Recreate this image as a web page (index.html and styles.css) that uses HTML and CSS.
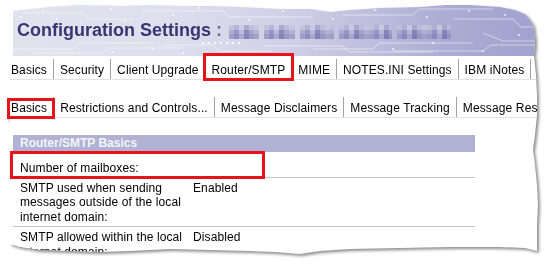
FILE: index.html
```html
<!DOCTYPE html>
<html lang="en">
<head>
<meta charset="utf-8">
<title>Configuration Settings</title>
<link rel="stylesheet" href="styles.css">
</head>
<body>
<div class="sheet">
  <div class="paper">
    <header class="banner">
      <svg class="circuit" width="522" height="51" viewBox="0 0 522 51" aria-hidden="true">
        <g fill="none" stroke="#ffffff" stroke-opacity="0.5" stroke-width="1">
          <path d="M0 44 H60 L66 38 H140"/>
          <path d="M20 48 H90 L95 43 H170"/>
          <path d="M150 40 H200 L206 46 H260"/>
          <path d="M250 41 H330 L336 47 H420"/>
          <path d="M300 44 H360 L366 38 H460"/>
          <path d="M380 46 H470 L478 40 H522"/>
          <path d="M10 8 H70 L76 14 H120"/>
          <path d="M130 6 H210 L216 12 H300"/>
          <path d="M330 10 H400 L406 4 H480"/>
          <path d="M440 14 H500 L508 22 H522"/>
          <path d="M60 20 V30"/>
          <path d="M470 28 L490 36 H522"/>
        </g>
        <g fill="#ffffff" fill-opacity="0.8">
          <circle cx="8" cy="12" r="1"/><circle cx="30" cy="6" r="1"/><circle cx="44" cy="14" r="1"/>
          <circle cx="98" cy="4" r="1"/><circle cx="112" cy="16" r="1"/><circle cx="160" cy="10" r="1"/>
          <circle cx="186" cy="3" r="1"/><circle cx="236" cy="15" r="1"/><circle cx="270" cy="6" r="1"/>
          <circle cx="320" cy="14" r="1"/><circle cx="362" cy="5" r="1"/><circle cx="414" cy="12" r="1"/>
          <circle cx="456" cy="6" r="1"/><circle cx="492" cy="10" r="1"/><circle cx="506" cy="30" r="1"/>
          <circle cx="190" cy="38" r="1.3"/><circle cx="196" cy="38" r="1.3"/><circle cx="202" cy="38" r="1.3"/>
          <circle cx="208" cy="38" r="1.3"/><circle cx="214" cy="38" r="1.3"/><circle cx="220" cy="38" r="1.3"/>
          <circle cx="226" cy="38" r="1.3"/>
          <circle cx="140" cy="44" r="1"/><circle cx="170" cy="48" r="1"/><circle cx="420" cy="38" r="1"/>
          <circle cx="380" cy="44" r="1"/><circle cx="100" cy="47" r="1"/><circle cx="470" cy="46" r="1"/>
        </g>
      </svg>
      <h1 class="title">Configuration Settings <span class="colon">:</span></h1>
      <span class="redacted" role="img" aria-label="server name (pixelated)">
        <i class="blk w1"></i><i class="blk w2"></i><i class="blk w3"></i><i class="blk w4"></i><i class="blk w5"></i>
      </span>
    </header>

    <ul class="tabs tabs-main">
      <li class="tab first">Basics</li>
      <li class="tab">Security</li>
      <li class="tab">Client Upgrade</li>
      <li class="tab marked">Router/SMTP</li>
      <li class="tab">MIME</li>
      <li class="tab">NOTES.INI Settings</li>
      <li class="tab">IBM iNotes</li>
    </ul>

    <ul class="tabs tabs-sub">
      <li class="tab first marked">Basics</li>
      <li class="tab">Restrictions and Controls...</li>
      <li class="tab">Message Disclaimers</li>
      <li class="tab">Message Tracking</li>
      <li class="tab">Message Restrictions</li>
    </ul>

    <section class="panel">
      <h2 class="panel-head">Router/SMTP Basics</h2>
      <div class="row row-first marked-row">
        <div class="label">Number of mailboxes:</div>
        <div class="value"></div>
      </div>
      <div class="row">
        <div class="label">SMTP used when sending messages outside of the local internet domain:</div>
        <div class="value">Enabled</div>
      </div>
      <div class="row">
        <div class="label">SMTP allowed within the local internet domain:</div>
        <div class="value">Disabled</div>
      </div>
    </section>
  </div>
</div>
</body>
</html>
```

FILE: styles.css
```css
html, body {
  margin: 0;
  padding: 0;
  background: #ffffff;
}

body {
  width: 547px;
  height: 268px;
  overflow: hidden;
  font-family: "Liberation Sans", Arial, sans-serif;
  font-size: 12px;
  color: #000000;
}

.sheet {
  padding: 5px 0 0 10px;
  filter: drop-shadow(2px 2px 1.5px rgba(0, 0, 0, 0.45));
}

.paper {
  width: 528px;
  height: 255px;
  background: #ffffff;
  clip-path: polygon(
    -6px 6px, 3px 6px, 20px 4px, 40px 2px, 70px 0px, 110px 1px, 140px 0px, 170px 1px,
    200px 1px, 230px 2px, 270px 4px, 300px 4px, 320px 7px, 340px 5px, 370px 3px,
    410px 2px, 435px 0px, 460px 0px, 490px 2px, 505px 5px, 515px 9px, 520px 15px,
    523px 20px, 525px 35px, 524px 50px, 526px 70px, 527px 90px, 527px 110px,
    525px 130px, 523px 145px, 525px 160px, 527px 180px, 528px 200px, 527px 220px,
    527px 235px, 527px 246px, 515px 243px, 490px 242px, 440px 242px, 390px 243px,
    340px 244px, 310px 246px, 290px 249px, 265px 247px, 240px 246px, 200px 245px,
    160px 244px, 120px 246px, 90px 247px, 60px 246px, 30px 245px, 10px 242px,
    0px 239px, -6px 239px
  );
}

/* ---------- banner ---------- */
.banner {
  position: relative;
  margin-left: 3px;
  width: 522px;
  height: 51px;
  box-sizing: border-box;
  padding: 15px 0 0 4px;
  display: flex;
  align-items: flex-start;
  background: linear-gradient(90deg, #e2e2ef 0%, #dedeed 30%, #d2d2e7 50%, #bebedd 68%, #aaaad3 85%, #a2a2cf 100%);
}

.circuit {
  position: absolute;
  left: 0;
  top: 0;
}

.title {
  position: relative;
  margin: 0;
  font-family: "Liberation Sans", Arial, sans-serif;
  font-size: 18px;
  line-height: 21px;
  font-weight: bold;
  color: #363673;
  white-space: nowrap;
}

.colon {
  color: #6a6a9c;
}

.redacted {
  position: relative;
  display: flex;
  gap: 5px;
  margin: 5px 0 0 7px;
}

.blk {
  display: block;
  height: 14px;
  opacity: 0.85;
  background-image:
    linear-gradient(180deg, rgba(255, 255, 255, 0.3) 0 5px, rgba(255, 255, 255, 0) 5px 9px, rgba(80, 80, 140, 0.18) 9px 14px),
    repeating-linear-gradient(90deg, #a6a6cf 0 5px, #8e8ec2 5px 10px, #b6b6da 10px 15px, #7e7eb6 15px 20px, #9e9eca 20px 25px, #aeaed4 25px 30px);
}

.w1 { width: 30px; }
.w2 { width: 31px; }
.w3 { width: 34px; }
.w4 { width: 53px; }
.w5 { width: 54px; }

/* ---------- tabs ---------- */
.tabs {
  display: flex;
  margin: 0;
  padding: 0;
  list-style: none;
  white-space: nowrap;
  border-bottom: 1px solid #e2e2e2;
  letter-spacing: 0.1px;
}

.tabs-main {
  padding-top: 3px;
}

.tabs-sub {
  margin-top: 17px;
  letter-spacing: 0.13px;
}

.tab {
  position: relative;
  height: 20px;
  box-sizing: border-box;
  padding: 3px 6px 0 6px;
  line-height: 17px;
  border-right: 1px solid #a3a3a3;
}

.tab.first {
  padding-left: 1px;
}

.marked::after {
  content: "";
  position: absolute;
  box-sizing: border-box;
  border: 3px solid #e5141b;
  pointer-events: none;
}

.tabs-main .marked::after {
  left: -3px;
  right: -3px;
  top: -6px;
  bottom: -2px;
}

.tabs-sub .marked::after {
  left: -3px;
  right: -2px;
  top: 1px;
  bottom: -2px;
}

/* ---------- panel ---------- */
.panel {
  margin: 17px 0 0 3px;
  width: 462px;
}

.panel-head {
  margin: 0;
  height: 17px;
  padding-left: 7px;
  font-size: 12px;
  line-height: 17px;
  font-weight: bold;
  color: #f4f4fa;
  background: #b1b1d3;
}

.row {
  position: relative;
  display: flex;
  line-height: 14.5px;
  padding: 3px 0 2px 0;
  border-bottom: 1px solid #c6c6c6;
  letter-spacing: 0.1px;
}

.row-first {
  padding-top: 8.5px;
  padding-bottom: 1.5px;
}

.label {
  flex: 0 0 180px;
  box-sizing: border-box;
  padding: 0 8px 0 7px;
}

.value {
  flex: 1;
}

.marked-row::after {
  content: "";
  position: absolute;
  left: -3px;
  top: -1px;
  width: 255px;
  height: 28px;
  box-sizing: border-box;
  border: 3px solid #e5141b;
  pointer-events: none;
}
```
